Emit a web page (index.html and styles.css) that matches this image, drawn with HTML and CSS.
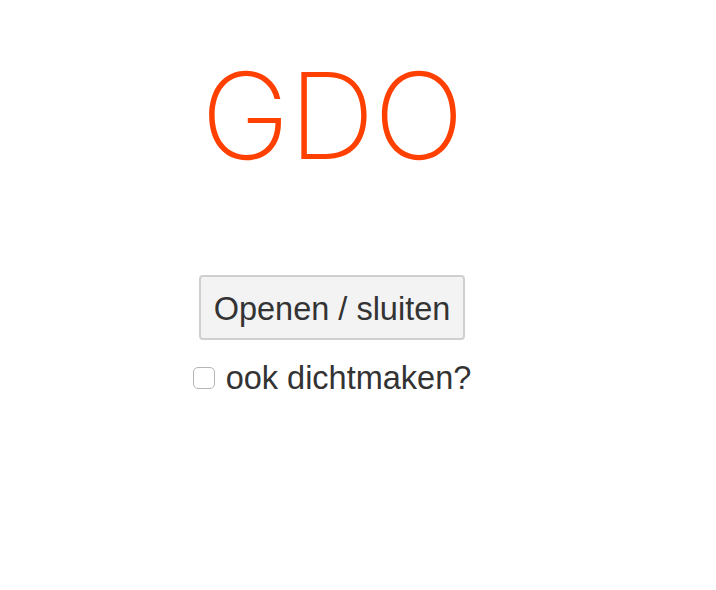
FILE: index.html
```html
<!DOCTYPE html>
<html>
<head>
<meta charset="utf-8">
<link rel="stylesheet" href="styles.css">
</head>
<body>
<main class="app">
  <h1 class="title">GDO</h1>
  <button class="toggle" type="button">Openen / sluiten</button>
  <label class="option"><input type="checkbox" class="check"><span>ook dichtmaken?</span></label>
</main>
</body>
</html>
```
FILE: styles.css
```css
html, body { margin: 0; background: #fff; }
body { padding: 8px; }
.app {
  width: 648px;
  display: flex;
  flex-direction: column;
  align-items: center;
  font-family: "Liberation Sans", Arial, sans-serif;
  color: #333;
}
.title {
  margin: 33px 0 0;
  font-family: Inter, Roboto, "Liberation Sans", sans-serif;
  font-weight: 250;
  font-size: 120px;
  letter-spacing: -1px;
  line-height: 150px;
  color: #ff4000;
}
.toggle {
  margin-top: 84px;
  width: 266px;
  height: 65px;
  padding: 4px 0 0;
  font-family: "Liberation Sans", Arial, sans-serif;
  font-size: 32.5px;
  color: #333;
  background: #f3f3f3;
  border: 2px solid #cfcfcf;
  border-radius: 4px;
}
.option {
  margin-top: 20px;
  display: flex;
  align-items: center;
  gap: 11px;
  font-size: 32.5px;
  line-height: 36px;
}
.check {
  appearance: none;
  margin: 0;
  width: 22px;
  height: 22px;
  border: 1.5px solid #b5b5b5;
  border-radius: 5px;
  background: #fff;
}
```
